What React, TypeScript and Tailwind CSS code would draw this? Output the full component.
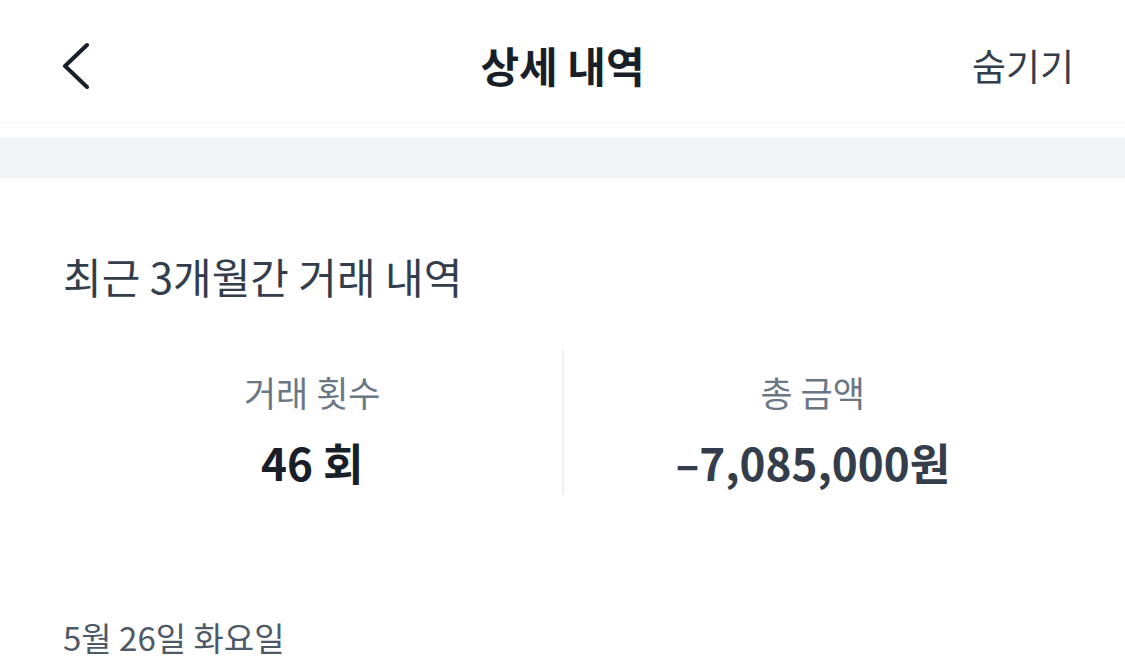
import React from "react";

export default function App() {
  return (
    <div
      className="w-[1125px] h-[664px] overflow-hidden bg-white"
      style={{ fontFamily: '"Noto Sans CJK KR", "Noto Sans", sans-serif' }}
    >
      <header className="h-[123px] pt-[7px] flex items-center justify-between pl-[60px] pr-[51px] relative">
        <button className="w-[32px] h-[48px] flex items-center">
          <svg width="30" height="48" viewBox="0 0 30 48" fill="none">
            <path d="M27 4 L5 25 L27 46" stroke="#191f28" strokeWidth="4" strokeLinecap="round" strokeLinejoin="round" />
          </svg>
        </button>
        <h1 className="absolute left-1/2 top-[7px] bottom-0 flex items-center -translate-x-1/2 text-[42px] font-bold text-[#191f28] leading-[60px]">상세 내역</h1>
        <span className="text-[37px] text-[#333d4b] leading-[56px]">숨기기</span>
      </header>
      <div className="h-px bg-[#f7f8f9]" />
      <div className="h-[13px]" />
      <div className="h-[41px] bg-[#f2f3f5]" />
      <section className="pt-[68px] px-[63px]">
        <h2 className="text-[42px] text-[#333d4b] leading-[60px]">최근 3개월간 거래 내역</h2>
      </section>
      <div className="mt-[44px] flex px-[63px]">
        <div className="flex-1 flex flex-col items-center pt-[18px]">
          <span className="text-[35px] text-[#6b7684] leading-[48px]">거래 횟수</span>
          <span className="mt-[18px] text-[44px] font-bold text-[#191f28] leading-[56px]">46 회</span>
        </div>
        <div className="w-[2px] h-[145px] bg-[#eef0f2]" />
        <div className="flex-1 flex flex-col items-center pt-[18px]">
          <span className="text-[35px] text-[#6b7684] leading-[48px]">총 금액</span>
          <span className="mt-[18px] text-[44px] font-bold text-[#333d4b] leading-[56px]">–7,085,000원</span>
        </div>
      </div>
      <div className="mt-[118px] px-[63px]">
        <span className="text-[33px] text-[#4e5968] leading-[48px]">5월 26일 화요일</span>
      </div>
    </div>
  );
}
